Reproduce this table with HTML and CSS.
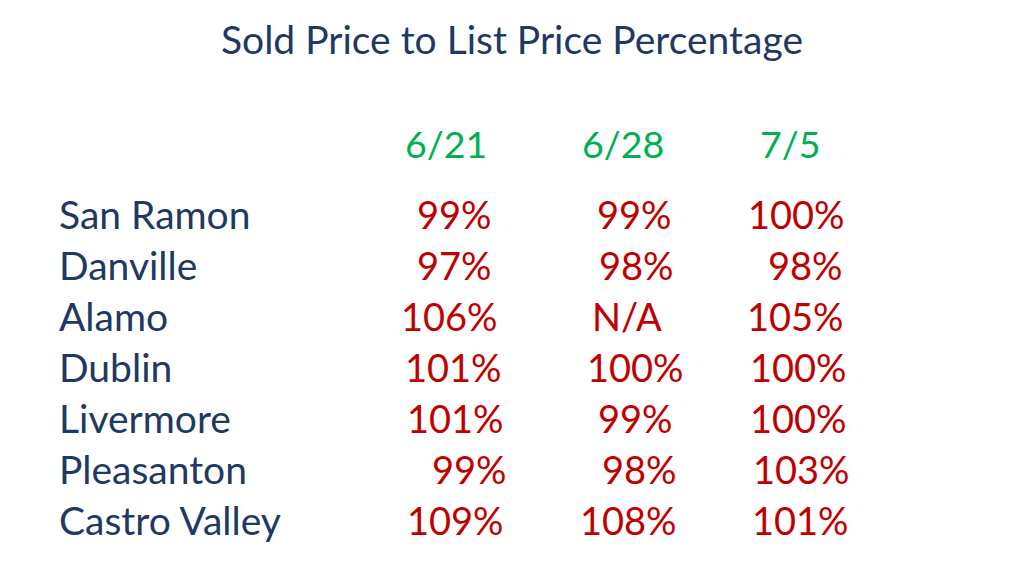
FILE: index.html
```html
<!DOCTYPE html>
<html>
<head>
<meta charset="utf-8">
<link rel="stylesheet" href="styles.css">
</head>
<body>
<div class="slide">
  <h1 class="title">Sold Price to List Price Percentage</h1>
  <div class="table">
    <div class="row head">
      <span class="label"></span>
      <span class="val" style="padding-left:25px">6/21</span>
      <span class="val" style="padding-left:12px">6/28</span>
      <span class="val" style="padding-left:20px">7/5</span>
    </div>
    <div class="rows">
      <div class="row">
        <span class="label">San Ramon</span>
        <span class="val" style="padding-left:37px">99%</span>
        <span class="val" style="padding-left:27px">99%</span>
        <span class="val" style="padding-left:8px">100%</span>
      </div>
      <div class="row">
        <span class="label">Danville</span>
        <span class="val" style="padding-left:37px">97%</span>
        <span class="val" style="padding-left:29px">98%</span>
        <span class="val" style="padding-left:28px">98%</span>
      </div>
      <div class="row">
        <span class="label">Alamo</span>
        <span class="val" style="padding-left:21px">106%</span>
        <span class="val" style="padding-left:22px">N/A</span>
        <span class="val" style="padding-left:7px">105%</span>
      </div>
      <div class="row">
        <span class="label">Dublin</span>
        <span class="val" style="padding-left:25px">101%</span>
        <span class="val" style="padding-left:17px">100%</span>
        <span class="val" style="padding-left:10px">100%</span>
      </div>
      <div class="row">
        <span class="label">Livermore</span>
        <span class="val" style="padding-left:27px">101%</span>
        <span class="val" style="padding-left:28px">99%</span>
        <span class="val" style="padding-left:10px">100%</span>
      </div>
      <div class="row">
        <span class="label">Pleasanton</span>
        <span class="val" style="padding-left:52px">99%</span>
        <span class="val" style="padding-left:32px">98%</span>
        <span class="val" style="padding-left:13px">103%</span>
      </div>
      <div class="row">
        <span class="label">Castro Valley</span>
        <span class="val" style="padding-left:27px">109%</span>
        <span class="val" style="padding-left:10px">108%</span>
        <span class="val" style="padding-left:12px">101%</span>
      </div>
    </div>
  </div>
</div>
</body>
</html>
```
FILE: styles.css
```css
html, body {
  margin: 0;
  padding: 0;
  background: #ffffff;
}
.slide {
  width: 1024px;
  height: 576px;
  box-sizing: border-box;
  padding-top: 14px;
  font-family: Lato, "Open Sans", sans-serif;
  overflow: hidden;
}
.title {
  margin: 0;
  font-size: 39px;
  line-height: 50px;
  font-weight: 400;
  color: #203864;
  text-align: center;
}
.table {
  margin-top: 54px;
  padding-left: 59px;
}
.row {
  display: grid;
  grid-template-columns: 321px 190px 170px 1fr;
  align-items: baseline;
  line-height: 51px;
  white-space: nowrap;
}
.rows {
  margin-top: 20px;
}
.label {
  color: #203864;
  font-size: 39px;
}
.val {
  color: #c00000;
  font-size: 38px;
}
.head .val {
  color: #00b050;
  font-size: 37.5px;
}
```
